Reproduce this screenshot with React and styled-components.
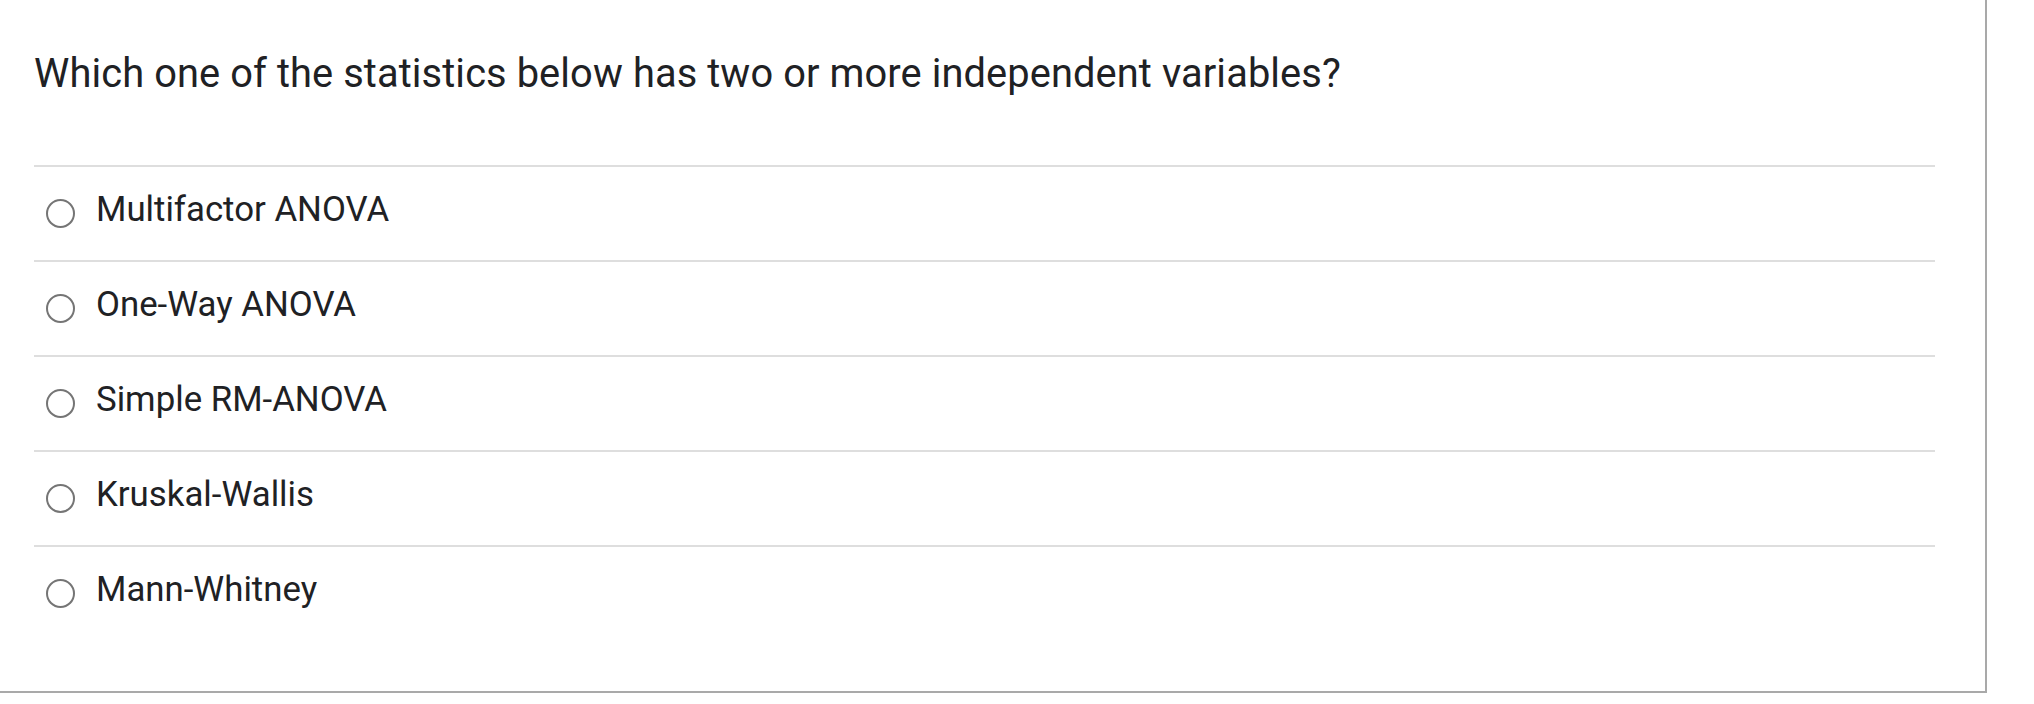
import React from "react";
import styled, { createGlobalStyle } from "styled-components";

const Global = createGlobalStyle`
  html, body { margin: 0; padding: 0; background: #ffffff; }
  body { font-family: Roboto, "Noto Sans", Arial, sans-serif; }
`;

const Card = styled.div`
  box-sizing: border-box;
  width: 1987px;
  height: 693px;
  background: #ffffff;
  border-right: 2px solid #a9a9a9;
  border-bottom: 2px solid #a9a9a9;
  padding: 0 50px 0 34px;
  display: flex;
  flex-direction: column;
`;

const Question = styled.div`
  font-family: Roboto, Arial, sans-serif;
  font-size: 39.8px;
  letter-spacing: 0.1px;
  line-height: 50px;
  color: #202124;
  padding-top: 49px;
  height: 165px;
  box-sizing: border-box;
`;

const Options = styled.div`
  display: flex;
  flex-direction: column;
`;

const Option = styled.label`
  display: flex;
  align-items: center;
  height: 95px;
  box-sizing: border-box;
  border-top: 2px solid #dedede;
  padding-left: 12px;
  gap: 21px;
  cursor: pointer;
`;

const Radio = styled.span`
  width: 29px;
  height: 29px;
  box-sizing: border-box;
  border: 2.5px solid #757575;
  border-radius: 50%;
  flex: none;
`;

const Label = styled.span`
  font-family: Roboto, Arial, sans-serif;
  font-size: 34.8px;
  color: #202124;
  line-height: 1;
  margin-top: -9px;
`;

const options = [
  "Multifactor ANOVA",
  "One-Way ANOVA",
  "Simple RM-ANOVA",
  "Kruskal-Wallis",
  "Mann-Whitney",
];

export default function App() {
  return (
    <>
      <Global />
      <Card>
        <Question>Which one of the statistics below has two or more independent variables?</Question>
        <Options>
          {options.map((o) => (
            <Option key={o}>
              <Radio />
              <Label>{o}</Label>
            </Option>
          ))}
        </Options>
      </Card>
    </>
  );
}
